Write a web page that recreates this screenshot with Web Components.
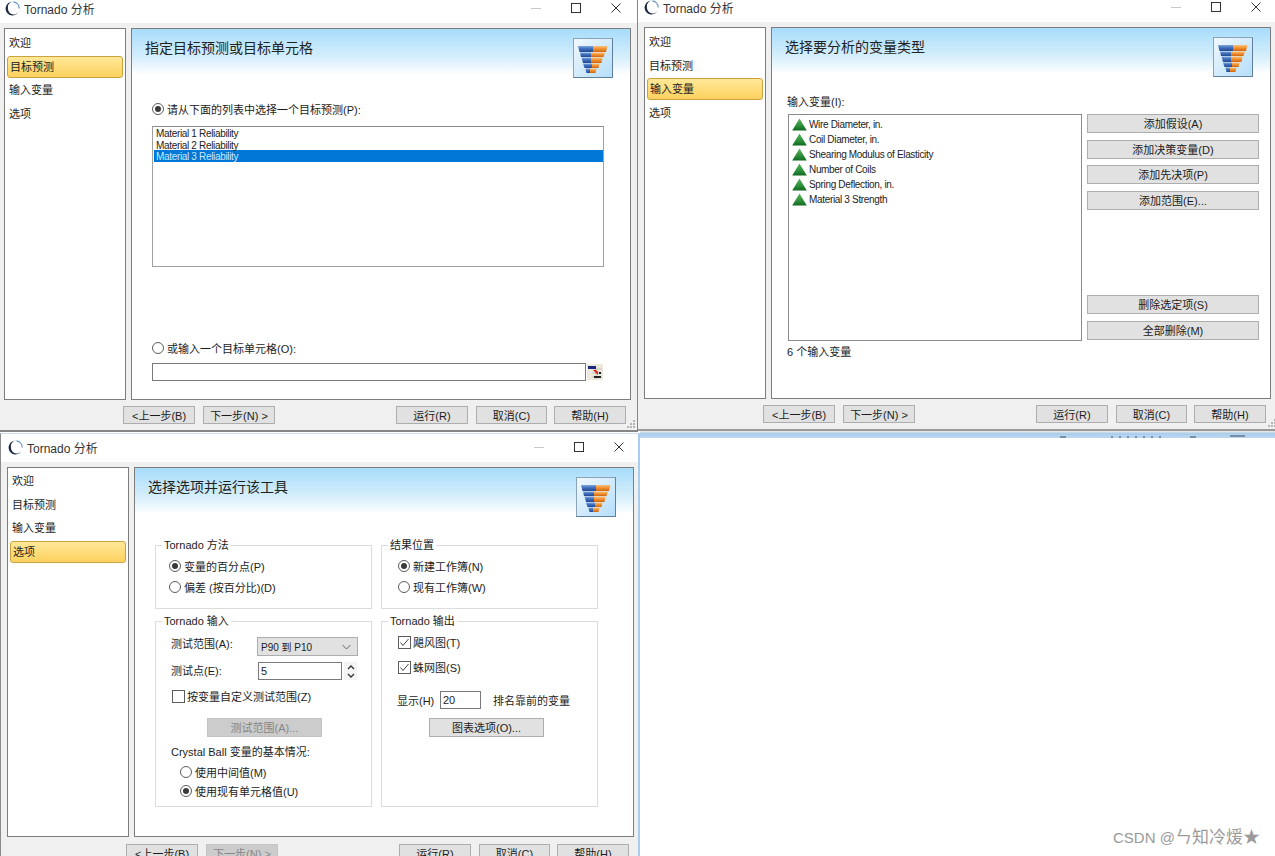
<!DOCTYPE html>
<html lang="zh">
<head>
<meta charset="utf-8">
<title>Tornado 分析</title>
<style>
  html, body { margin: 0; height: 100%; overflow: hidden; background: #fff; }
  body { position: relative; font: 11px "Liberation Sans", "Noto Sans CJK SC", sans-serif; color: #1c1c1c; }
  #w1 { left: -2px; top: -5px; height: 437px; --bottom-edge: 2px solid #858585; --edge-right: 1px solid #858585; --ctl-right: 1px; z-index: 2; }
  #w2 { left: 638px; top: -6px; height: 437px; --bottom-edge: 2px solid #9a9a9a; --ctl-right: 2px; --bar-left: 6px; z-index: 1; }
  #w3 { left: 0; top: 433px; height: 441px; --panel-height: 370px; --nav-top: 2px; --foot-top: 7px; --ctl-right: -1px; --edge-left: 1px solid #8a8a8a; --edge-right: 2px solid #a9cdec; --edge-top: 1px solid #cfe0f0; z-index: 3; }
</style>
</head>
<body>
<tornado-window id="w1" step="1" heading="指定目标预测或目标单元格" grip>
  <target-page></target-page>
</tornado-window>
<tornado-window id="w2" step="2" heading="选择要分析的变量类型" grip>
  <variables-page></variables-page>
</tornado-window>
<tornado-window id="w3" step="3" heading="选择选项并运行该工具" next-disabled>
  <options-page></options-page>
</tornado-window>
<desktop-strip></desktop-strip>
<csdn-mark>CSDN @<span>ㄣ知冷煖★</span></csdn-mark>

<script>
(() => {
  const define = (name, html, setup) => {
    const template = document.createElement('template')
    template.innerHTML = html
    customElements.define(name, class extends HTMLElement {
      constructor() {
        super()
        this.attachShadow({ mode: 'open' })
        this.shadowRoot.appendChild(template.content.cloneNode(true))
        if (setup) setup(this, this.shadowRoot)
      }
    })
  }

  define('funnel-icon', `
    <style>
      :host { display: block; width: 40px; height: 40px; }
      svg { display: block; }
    </style>
    <svg width="40" height="40" viewBox="0 0 40 40">
      <defs>
        <linearGradient id="bg" x1="0" y1="0" x2="1" y2="1"><stop offset="0" stop-color="#f2f8fd"/><stop offset="1" stop-color="#b4defa"/></linearGradient>
        <linearGradient id="bl" x1="0" y1="0" x2="0" y2="1"><stop offset="0" stop-color="#7ea6dc"/><stop offset=".45" stop-color="#3f6fbd"/><stop offset="1" stop-color="#24488f"/></linearGradient>
        <linearGradient id="or" x1="0" y1="0" x2="0" y2="1"><stop offset="0" stop-color="#fbc27e"/><stop offset=".45" stop-color="#f39332"/><stop offset="1" stop-color="#cf6510"/></linearGradient>
      </defs>
      <rect x=".5" y=".5" width="39" height="39" fill="url(#bg)" stroke="#8ba3b8"/>
      <path d="M39.500 .5V39.500H.5" fill="none" stroke="#5f7f9c"/>
      <path d="M5 8H20V14H6.500Z" fill="url(#bl)"/><path d="M20 8H34.500L33 14H20Z" fill="url(#or)"/>
      <path d="M7 14.500H18V19H8Z" fill="url(#bl)"/><path d="M18 14.500H32L30.500 19H18Z" fill="url(#or)"/>
      <path d="M8.500 19.500H18V25H10Z" fill="url(#bl)"/><path d="M18 19.500H29.500L28.500 25H18Z" fill="url(#or)"/>
      <path d="M10 25.500H19V30H11.500Z" fill="url(#bl)"/><path d="M19 25.500H26.500L25.500 30H19Z" fill="url(#or)"/>
      <path d="M12.500 30.500H17V35H13.500Z" fill="url(#bl)"/><path d="M17 30.500H23.500L22.500 35H17Z" fill="url(#or)"/>
    </svg>
  `)

  define('win-button', `
    <style>
      :host { display: block; box-sizing: border-box; width: var(--w, 72px); height: var(--h, 18px); padding-top: 1px; background: #e1e1e1; border: 1px solid #adadad; font-size: 11px; line-height: 16px; text-align: center; color: #1c1c1c; white-space: nowrap; }
      :host([disabled]) { background: #cccccc; border-color: #c4c4c4; color: #868686; }
    </style>
    <slot></slot>
  `)

  define('tornado-window', `
    <style>
      :host { position: absolute; display: block; box-sizing: border-box; width: 640px; background: #f0f0f0; border-left: var(--edge-left, 0); border-right: var(--edge-right, 0); border-top: var(--edge-top, 0); border-bottom: var(--bottom-edge, 0); }
      .bar { display: flex; align-items: center; height: 28px; padding: 0 0 2px var(--bar-left, 7px); background: #fff; font-size: 12px; color: #333; box-sizing: border-box; }
      .bar svg.logo { margin-right: 4px; flex: none; }
      .bar .name { flex: 1; }
      .ctl { display: flex; margin-right: var(--ctl-right, 0); }
      .ctl div { width: 40px; display: flex; justify-content: center; }
      .body { padding: 5px 0 0 6px; }
      .row { display: flex; gap: 5px; height: var(--panel-height, 372px); }
      .side, .main { box-sizing: border-box; height: 100%; background: #fff; border: 1px solid #7d7d7d; }
      .side { width: 122px; padding-top: var(--nav-top, 3px); }
      .main { width: 500px; display: flex; flex-direction: column; }
      .nav { box-sizing: border-box; height: 22px; margin: 0 2px 1.670px; padding: 0 0 2px 1px; display: flex; align-items: center; border: 1px solid transparent; font-size: 11px; }
      .nav.on { padding-left: 2px; border-color: #cba23f; border-radius: 3px; background: linear-gradient(#ffe898, #fdd15e); }
      .head { height: 50px; flex: none; display: flex; justify-content: space-between; padding: 0 17px 0 13px; box-sizing: border-box; background: linear-gradient(#a7dcfb, #d4eefc 55%, #fff 92%); }
      .head h1 { margin: 11px 0 0; font-size: 14px; line-height: 17px; font-weight: 400; color: #222; }
      .head funnel-icon { margin-top: 9px; }
      .foot { display: flex; padding: var(--foot-top, 6px) 0 0 119px; }
      .foot .next { margin-left: 8px; }
      .foot .run { margin-left: 121px; }
      .foot .cancel { margin-left: 8px; --w: 71px; }
      .foot .help { margin-left: 7px; }
      .grip { position: absolute; right: 1px; bottom: 1px; }
    </style>
    <div class="bar">
      <svg class="logo" width="15" height="15" viewBox="0 0 15 15">
        <path d="M8 .5A7 7 0 1 0 14.500 8.500A5.500 5.500 0 0 1 3 7A5.500 5.500 0 0 1 8 .5Z" fill="#1d2a44"/>
        <path d="M8.500 .9A6.600 6.600 0 0 1 14.200 7.500" fill="none" stroke="#5b8fc4" stroke-width="1.200"/>
      </svg>
      <span class="name">Tornado 分析</span>
      <div class="ctl">
        <div><svg width="12" height="12"><path d="M1 6.500H11" stroke="#c8c8c8"/></svg></div>
        <div><svg width="12" height="12"><rect x="1.500" y="1.500" width="9" height="9" fill="none" stroke="#333"/></svg></div>
        <div><svg width="12" height="12"><path d="M1.500 1.500L10.500 10.500M10.500 1.500L1.500 10.500" stroke="#333"/></svg></div>
      </div>
    </div>
    <div class="body">
      <div class="row">
        <div class="side"></div>
        <div class="main">
          <div class="head"><h1></h1><funnel-icon></funnel-icon></div>
          <slot></slot>
        </div>
      </div>
      <div class="foot">
        <win-button>&lt;上一步(B)</win-button>
        <win-button class="next">下一步(N) &gt;</win-button>
        <win-button class="run">运行(R)</win-button>
        <win-button class="cancel">取消(C)</win-button>
        <win-button class="help">帮助(H)</win-button>
      </div>
    </div>
  `, (host, root) => {
    root.querySelector('h1').textContent = host.getAttribute('heading')
    const step = Number(host.getAttribute('step'))
    const side = root.querySelector('.side')
    ;['欢迎', '目标预测', '输入变量', '选项'].forEach((label, index) => {
      const item = document.createElement('div')
      item.className = index === step ? 'nav on' : 'nav'
      item.textContent = label
      side.append(item)
    })
    if (host.hasAttribute('next-disabled')) root.querySelector('.next').setAttribute('disabled', '')
    if (host.hasAttribute('grip')) {
      const grip = document.createElementNS('http://www.w3.org/2000/svg', 'svg')
      grip.setAttribute('class', 'grip')
      grip.setAttribute('width', '9')
      grip.setAttribute('height', '9')
      grip.innerHTML = '<path d="M6 0h2v2H6zM3 3h2v2H3zM6 3h2v2H6zM0 6h2v2H0zM3 6h2v2H3zM6 6h2v2H6z" fill="#b4b4b4"/>'
      root.append(grip)
    }
  })

  define('win-radio', `
    <style>
      :host { display: flex; align-items: center; gap: 3px; height: 14px; font-size: 11px; white-space: nowrap; }
      i { box-sizing: border-box; width: 12px; height: 12px; flex: none; border: 1px solid #5c5c5c; border-radius: 50%; background: #fff; display: flex; align-items: center; justify-content: center; }
      :host([checked]) i::after { content: ""; width: 6px; height: 6px; border-radius: 50%; background: #3a3a3a; }
    </style>
    <i></i><slot></slot>
  `)

  define('win-check', `
    <style>
      :host { display: flex; align-items: center; gap: 2px; height: 14px; font-size: 11px; white-space: nowrap; }
      svg { flex: none; }
      path { display: none; }
      :host([checked]) path { display: block; }
    </style>
    <svg width="13" height="13"><rect x=".5" y=".5" width="12" height="12" fill="#fff" stroke="#5c5c5c"/><path d="M2.500 6.500L5 9.500L10.500 3" fill="none" stroke="#444"/></svg><slot></slot>
  `)

  define('win-field', `
    <style>
      :host { display: block; box-sizing: border-box; height: 18px; padding-left: 2px; background: #fff; border: 1px solid #7a7a7a; font-size: 11px; line-height: 16px; }
    </style>
    <slot></slot>
  `)

  define('group-box', `
    <style>
      :host { display: block; }
      fieldset { box-sizing: border-box; height: 100%; margin: 0; padding: 0; border: 1px solid #dcdcdc; }
      legend { height: 14px; margin-left: 6px; padding: 0 2px; font-size: 11px; line-height: 14px; }
    </style>
    <fieldset><legend></legend><slot></slot></fieldset>
  `, (host, root) => {
    root.querySelector('legend').textContent = host.getAttribute('legend')
  })

  define('var-item', `
    <style>
      :host { display: flex; align-items: center; gap: 2px; height: 15px; font-size: 10px; letter-spacing: -.33px; color: #222; white-space: nowrap; }
      svg { flex: none; }
    </style>
    <svg width="15" height="13" viewBox="0 0 15 13">
      <defs><linearGradient id="g" x1="0" y1="0" x2="0" y2="1"><stop offset="0" stop-color="#58b85f"/><stop offset=".6" stop-color="#2f8f3a"/><stop offset="1" stop-color="#0f6a20"/></linearGradient></defs>
      <path d="M7.500 .5L14.800 12.500H.2Z" fill="url(#g)"/>
    </svg>
    <slot></slot>
  `)

  define('target-page', `
    <style>
      :host { display: block; padding: 23px 0 0 20px; font-size: 11px; }
      .list { box-sizing: border-box; width: 452px; height: 141px; margin-top: 10px; border: 1px solid #a0a0a0; border-top-color: #8a8a8a; font-size: 10px; letter-spacing: -.33px; }
      .list div { height: 11.500px; line-height: 13px; padding-left: 2px; margin: 0 0 0 1px; color: #222; }
      .list .sel { height: 12px; background: #0078d7; color: #cfe6fa; }
      .second { margin-top: 74px; }
      .cell { display: flex; margin-top: 8px; width: 451px; }
      .cell win-field { width: 434px; }
      .cell svg { margin: 1px 0 0 1px; }
    </style>
    <win-radio checked>请从下面的列表中选择一个目标预测(P):</win-radio>
    <div class="list">
      <div>Material 1 Reliability</div>
      <div>Material 2 Reliability</div>
      <div class="sel">Material 3 Reliability</div>
    </div>
    <win-radio class="second">或输入一个目标单元格(O):</win-radio>
    <div class="cell">
      <win-field></win-field>
      <svg width="16" height="16" viewBox="0 0 16 16">
        <rect width="16" height="16" fill="#ece8dc"/>
        <path d="M5 5H15M5 9H15M5 13H15M9 3V15" stroke="#c9c5b4"/>
        <rect x="1" y="2" width="8" height="3" fill="#1d2a7a"/>
        <path d="M6 6L11 11L11 8L9 6Z" fill="#e01818"/>
        <rect x="7" y="12" width="7" height="2" fill="#222"/>
        <rect x="12" y="8" width="2" height="2" fill="#222"/>
      </svg>
    </div>
  `)

  define('variables-page', `
    <style>
      :host { display: block; padding: 17px 0 0 15px; font-size: 11px; }
      .cap { height: 14px; line-height: 14px; }
      .grid { display: flex; gap: 5px; margin-top: 5px; padding-left: 1px; }
      .list { box-sizing: border-box; width: 294px; height: 227px; padding: 2px 0 0 3px; border: 1px solid #8a8a8a; }
      .btns { display: flex; flex-direction: column; gap: 6.500px; --w: 172px; --h: 19px; }
      .btns .low { margin-top: 79px; }
      .count { margin-top: 4px; }
    </style>
    <div class="cap">输入变量(I):</div>
    <div class="grid">
      <div class="list">
        <var-item>Wire Diameter, in.</var-item>
        <var-item>Coil Diameter, in.</var-item>
        <var-item>Shearing Modulus of Elasticity</var-item>
        <var-item>Number of Coils</var-item>
        <var-item>Spring Deflection, in.</var-item>
        <var-item>Material 3 Strength</var-item>
      </div>
      <div class="btns">
        <win-button>添加假设(A)</win-button>
        <win-button>添加决策变量(D)</win-button>
        <win-button>添加先决项(P)</win-button>
        <win-button>添加范围(E)...</win-button>
        <win-button class="low">删除选定项(S)</win-button>
        <win-button>全部删除(M)</win-button>
      </div>
    </div>
    <div class="cap count">6 个输入变量</div>
  `)

  define('options-page', `
    <style>
      :host { display: grid; grid-template-columns: 217px 217px; grid-template-rows: 71px 193px; gap: 5px 9px; padding: 20px 0 0 20px; font-size: 11px; }
      .in { display: flex; flex-direction: column; padding-left: 13px; }
      .in.out { padding-left: 16px; }
      .line { display: flex; align-items: center; }
      .lab { width: 86px; flex: none; }
      .select { box-sizing: border-box; width: 101px; height: 19px; padding: 0 6px 0 3px; display: flex; justify-content: space-between; align-items: center; background: #e1e1e1; border: 1px solid #adadad; font-size: 10px; }
      .wide { --w: 115px; --h: 19px; }
    </style>
    <group-box legend="Tornado 方法">
      <div class="in" style="padding-top:7px;gap:7px">
        <win-radio checked>变量的百分点(P)</win-radio>
        <win-radio>偏差 (按百分比)(D)</win-radio>
      </div>
    </group-box>
    <group-box legend="结果位置">
      <div class="in out" style="padding-top:7px;gap:7px">
        <win-radio checked>新建工作簿(N)</win-radio>
        <win-radio>现有工作簿(W)</win-radio>
      </div>
    </group-box>
    <group-box legend="Tornado 输入">
      <div class="in" style="padding-left:15px">
        <div class="line" style="margin-top:9px;height:19px">
          <span class="lab" style="margin-top:-8px">测试范围(A):</span>
          <div class="select">P90 到 P10<svg width="9" height="6"><path d="M.5 1L4.500 5L8.500 1" fill="none" stroke="#666"/></svg></div>
        </div>
        <div class="line" style="margin-top:6px;height:18px">
          <span class="lab" style="width:87px;margin-top:-2px">测试点(E):</span>
          <win-field style="width:84px">5</win-field>
          <svg width="14" height="18" viewBox="0 0 14 18" style="margin-left:1px"><rect x="1" width="13" height="18" fill="#f4f4f4"/><path d="M5 7L8 4L11 7M5 12L8 15L11 12" fill="none" stroke="#333" stroke-width="1.300"/></svg>
        </div>
        <win-check style="margin:9px 0 0 1px">按变量自定义测试范围(Z)</win-check>
        <win-button class="wide" disabled style="margin:15px 0 0 36px">测试范围(A)...</win-button>
        <div style="margin-top:8px;height:14px;line-height:14px">Crystal Ball 变量的基本情况:</div>
        <win-radio style="margin:6px 0 0 9px">使用中间值(M)</win-radio>
        <win-radio checked style="margin:5px 0 0 9px">使用现有单元格值(U)</win-radio>
      </div>
    </group-box>
    <group-box legend="Tornado 输出">
      <div class="in out">
        <win-check checked style="margin-top:7px">飓风图(T)</win-check>
        <win-check checked style="margin-top:11px">蛛网图(S)</win-check>
        <div class="line" style="margin:17px 0 0 -1px;height:18px">
          <span style="width:43px;flex:none">显示(H)</span>
          <win-field style="width:41px">20</win-field>
          <span style="margin-left:12px">排名靠前的变量</span>
        </div>
        <win-button class="wide" style="margin:9px 0 0 31px">图表选项(O)...</win-button>
      </div>
    </group-box>
  `)

  // sliver of the window behind, visible under the second dialog
  define('desktop-strip', `
    <style>
      :host { position: absolute; left: 640px; top: 431px; width: 635px; height: 7px; display: block; background: linear-gradient(#e6e6e6 0, #e6e6e6 1px, #a9cdec 2px, #bcd8f2 100%); }
      svg { display: block; }
    </style>
    <svg width="635" height="7"><path d="M420 6h6M472 5v2M480 5v2M488 5v2M496 5v2M504 5v2M512 5v2M520 5v2M550 6h6M590 5h15" stroke="#3c4a5c"/></svg>
  `)

  define('csdn-mark', `
    <style>
      :host { position: absolute; left: 1113px; top: 829px; display: block; font: 15px/18px "Liberation Sans", "Noto Sans CJK SC", sans-serif; color: #9a9a9a; white-space: nowrap; z-index: 5; }
      ::slotted(span) { font-size: 17px; }
    </style>
    <slot></slot>
  `)
})()
</script>
</body>
</html>
